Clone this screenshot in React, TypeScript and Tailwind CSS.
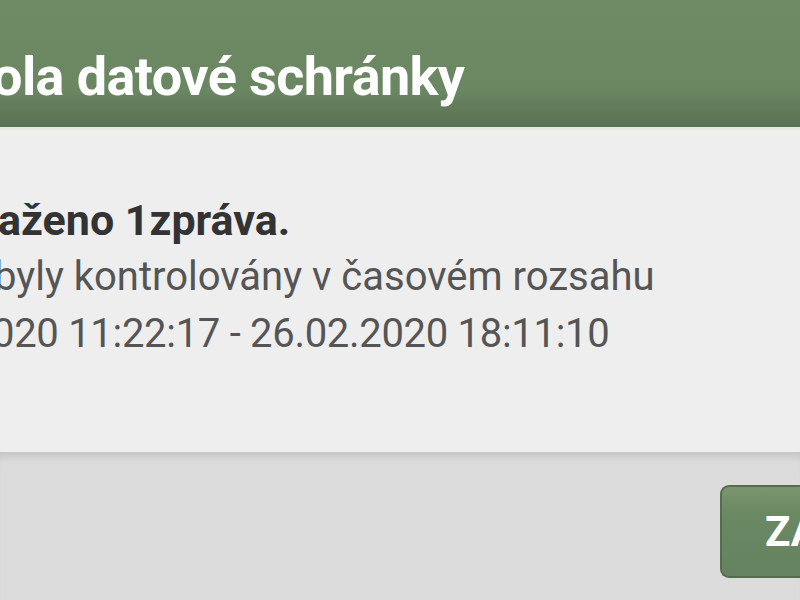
export default function App() {
  return (
    <div className="w-[800px] h-[600px] overflow-hidden flex flex-col bg-[#dcdcdc] font-['Roboto',sans-serif]">
      <header className="h-[130px] shrink-0 bg-gradient-to-b from-[#6e8b66] via-[#6a8762] via-70% to-[#5b7053] border-b-[3px] border-[#e3eadf] pt-[45px] overflow-hidden">
        <h1 className="-ml-[8px] whitespace-nowrap text-white font-bold text-[54px] leading-[64px] tracking-[-0.6px]">
          ola datové schránky
        </h1>
      </header>
      <main className="h-[322px] shrink-0 bg-[#eeeeee] pt-[62px] overflow-hidden">
        <p className="-ml-[2px] whitespace-nowrap text-[#333333] font-bold text-[43px] leading-[56px]">
          aženo 1zpráva.
        </p>
        <p className="-ml-[6px] whitespace-nowrap text-[#555555] text-[40px] leading-[57px]">
          byly kontrolovány v časovém rozsahu
        </p>
        <p className="-ml-[8px] whitespace-nowrap text-[#555555] text-[40px] leading-[57px] tracking-[-0.3px]">
          020 11:22:17 - 26.02.2020 18:11:10
        </p>
      </main>
      <footer className="flex-1 flex justify-end items-start pt-[33px] shadow-[inset_0_10px_10px_-6px_rgba(0,0,0,0.12)] overflow-hidden">
        <button className="w-[80px] h-[93px] shrink-0 rounded-l-[9px] border-2 border-r-0 border-[#566c4f] bg-gradient-to-b from-[#7a9671] via-[#6a8862] via-30% to-[#658360] pl-[43px] text-left text-white font-bold text-[42px] overflow-hidden whitespace-nowrap">
          ZAVŘÍT
        </button>
      </footer>
    </div>
  );
}
